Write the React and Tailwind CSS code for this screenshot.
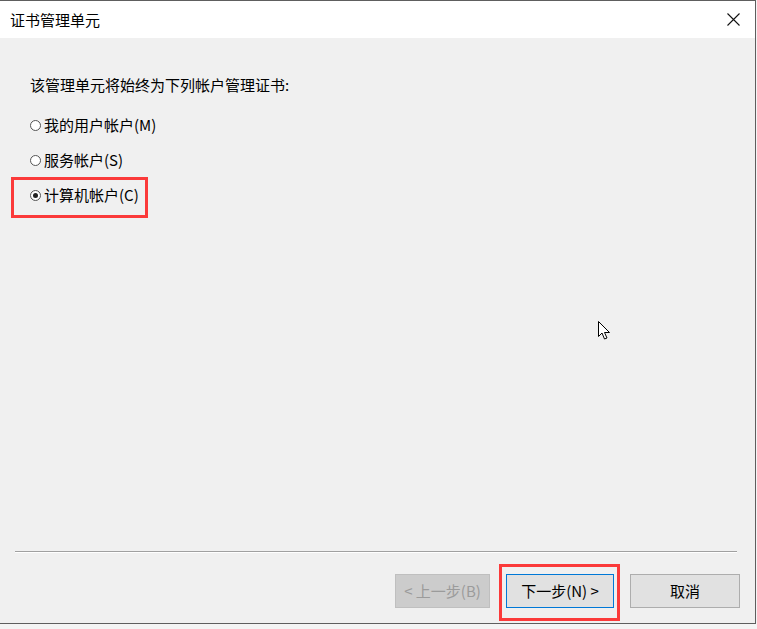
import React from "react";

const font = { fontFamily: "'Noto Sans CJK SC', 'Noto Sans', sans-serif" };

function Radio({ checked, label }) {
  return (
    <div className="flex h-[20px] items-center pl-[30px]">
      <span className="flex h-[11px] w-[11px] items-center justify-center rounded-full border border-[#555] bg-white">
        {checked && <span className="h-[5px] w-[5px] rounded-full bg-[#222]" />}
      </span>
      <span className="ml-[3px] text-[15px] leading-[20px] text-black">{label}</span>
    </div>
  );
}

export default function App() {
  return (
    <div className="h-[629px] w-[757px] bg-[#f4f4f4]" style={font}>
      <div className="relative flex h-[624px] w-[756px] flex-col border-t border-r border-b border-[#5e5e5e] bg-[#f0f0f0]">
        <div className="flex h-[37px] items-center justify-between bg-white pl-[10px] pr-[14px]">
          <span className="text-[15px] leading-[20px] text-black">证书管理单元</span>
          <svg width="13" height="13" viewBox="0 0 13 13" className="mr-[1px]">
            <path d="M0.5 0.5 L12.5 12.5 M12.5 0.5 L0.5 12.5" stroke="#111" strokeWidth="1.1" />
          </svg>
        </div>
        <div className="flex flex-1 flex-col">
          <div className="pl-[30px] pt-[37px] text-[15px] leading-[20px] text-black">
            该管理单元将始终为下列帐户管理证书:
          </div>
          <div className="mt-[20px] flex flex-col gap-[15px]">
            <Radio label="我的用户帐户(M)" />
            <Radio label="服务帐户(S)" />
            <Radio checked label="计算机帐户(C)" />
          </div>
          <div className="flex-1" />
          <div className="ml-[15px] mr-[18px] flex flex-col">
            <div className="h-[1px] bg-[#a0a0a0]" />
            <div className="h-[1px] bg-white" />
          </div>
          <div className="mt-[21px] mb-[15px] flex justify-end gap-[16px] pr-[15px]">
            <div className="flex h-[34px] w-[95px] items-center justify-center border border-[#bfbfbf] bg-[#cccccc] text-[15px] text-[#9b9b9b]">
              &lt; 上一步(B)
            </div>
            <div className="flex h-[34px] w-[108px] items-center justify-center border border-[#0078d7] bg-[#e1e1e1] text-[15px] text-black">
              下一步(N) &gt;
            </div>
            <div className="flex h-[34px] w-[110px] items-center justify-center border border-[#adadad] bg-[#e1e1e1] text-[15px] text-black">
              取消
            </div>
          </div>
        </div>

        {/* annotation boxes */}
        <div className="absolute left-[11px] top-[176px] h-[41px] w-[137px] border-[3px] border-[#fb3a3a]" />
        <div className="absolute left-[499px] top-[563px] h-[57px] w-[121px] border-[3px] border-[#fb3a3a]" />

        {/* mouse cursor */}
        <svg className="absolute left-[598px] top-[320px]" width="13" height="20" viewBox="0 0 13 20">
          <path d="M0.5 0.5 L0.5 15.5 L4 12 L6.5 18 L9 17 L6.5 11.5 L11.5 11.5 Z" fill="white" stroke="#000" strokeWidth="1" strokeLinejoin="miter" />
        </svg>
      </div>
    </div>
  );
}
